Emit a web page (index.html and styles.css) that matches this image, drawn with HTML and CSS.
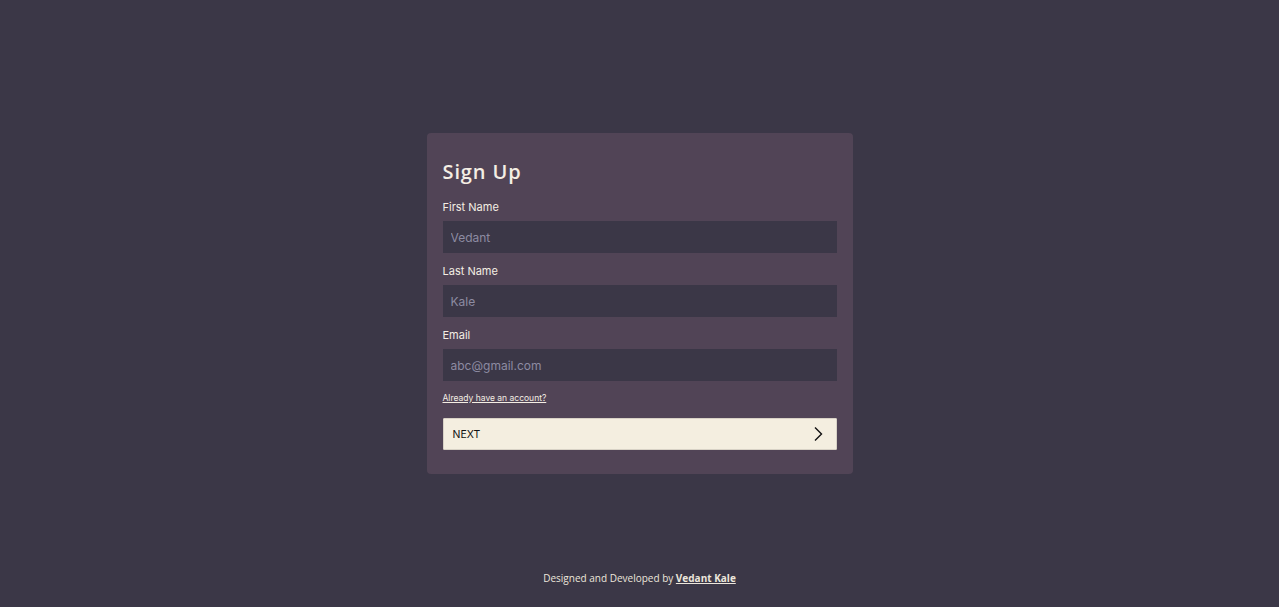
FILE: index.html
```html
<!DOCTYPE html>
<html lang="en">
<head>
<meta charset="utf-8">
<title>Sign Up</title>
<link rel="stylesheet" href="styles.css">
</head>
<body>
<div class="page">
  <div class="spacer"></div>
  <form class="card">
    <h1 class="title">Sign Up</h1>
    <label class="label" for="fn">First Name</label>
    <input class="input" id="fn" type="text" placeholder="Vedant">
    <label class="label" for="ln">Last Name</label>
    <input class="input" id="ln" type="text" placeholder="Kale">
    <label class="label" for="em">Email</label>
    <input class="input" id="em" type="email" placeholder="abc@gmail.com">
    <a class="link" href="#">Already have an account?</a>
    <button class="next" type="button">
      <span>NEXT</span>
      <svg class="chev" width="12" height="16" viewBox="0 0 12 16"><path d="M3 1.5 L9.5 8 L3 14.5" fill="none" stroke="#111" stroke-width="1.4"/></svg>
    </button>
  </form>
  <footer class="footer">Designed and Developed by <a href="#">Vedant Kale</a></footer>
</div>
</body>
</html>
```
FILE: styles.css
```css
html, body { margin: 0; padding: 0; }
body {
  background: #3b3747;
  font-family: "Inter", "Noto Sans", sans-serif;
}
.page {
  height: 607px;
  display: grid;
  grid-template-rows: 1fr auto 1fr;
  justify-items: center;
}
.card {
  width: 426px;
  box-sizing: border-box;
  background: #514456;
  border-radius: 4px;
  padding: 24px 16px 24px 16px;
  display: flex;
  flex-direction: column;
}
.title {
  margin: 0 0 12px 0;
  font-family: "Open Sans", sans-serif;
  font-weight: 600;
  font-size: 20px;
  line-height: 30px;
  letter-spacing: 0.9px;
  color: #f4eee4;
}
.label {
  color: #f4eee4;
  font-size: 11px;
  line-height: 16px;
  margin-bottom: 6px;
}
.input {
  height: 32px;
  box-sizing: border-box;
  border: none;
  outline: none;
  background: #3b3747;
  color: #f4eee4;
  padding: 0 8px;
  font-family: inherit;
  font-size: 12px;
  margin-bottom: 10px;
}
.input::placeholder { color: #8d8ba2; }
.link {
  color: #f4eee4;
  font-size: 8.5px;
  line-height: 12px;
  text-decoration: underline;
  margin-top: 1px;
  margin-bottom: 14px;
  align-self: flex-start;
}
.next {
  height: 32px;
  box-sizing: border-box;
  background: #f4eee0;
  border: 1px solid #d8d2c6;
  border-radius: 1px;
  display: flex;
  align-items: center;
  justify-content: space-between;
  padding: 0 12px 0 9px;
  font-family: inherit;
  font-size: 10.5px;
  color: #111;
  cursor: pointer;
}
.footer {
  align-self: end;
  padding-bottom: 22px;
  font-family: "Open Sans", sans-serif;
  font-size: 10px;
  color: #ece6dc;
}
.footer a {
  color: #ece6dc;
  font-weight: 700;
}
.spacer { }
```
